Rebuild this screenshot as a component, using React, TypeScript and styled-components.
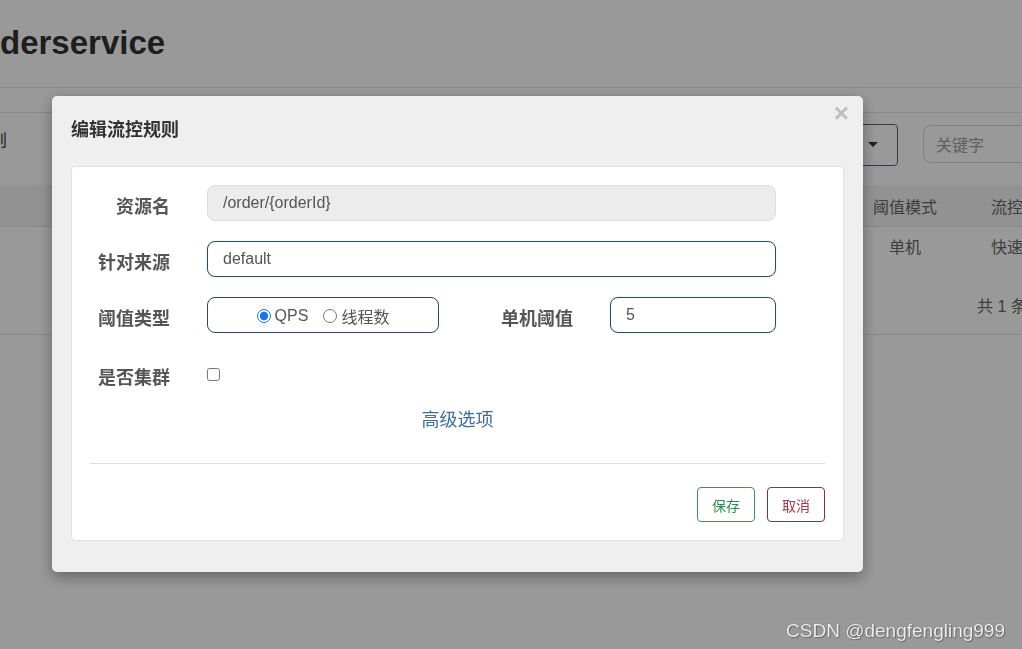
import React from 'react';
import styled, { createGlobalStyle } from 'styled-components';

const GlobalStyle = createGlobalStyle`
  html, body {
    margin: 0;
    padding: 0;
    background: #fff;
    overflow: hidden;
    font-family: "Liberation Sans", Arial, "Noto Sans CJK SC", sans-serif;
  }
  * {
    box-sizing: border-box;
  }
`;

/* ---------- page behind the dialog ---------- */

const Page = styled.div`
  width: 1022px;
  height: 649px;
  overflow: hidden;
`;

const Header = styled.div`
  height: 88px;
  display: flex;
  align-items: center;
  border-bottom: 1px solid #e4e4e4;
`;

const PageTitle = styled.h1`
  margin: 0 0 2px;
  font-size: 33px;
  font-weight: bold;
  color: #333;
`;

const Toolbar = styled.div`
  margin-top: 24px;
  height: 73px;
  padding-top: 11px;
  border-top: 1px solid #e4e4e4;
  display: flex;
  justify-content: space-between;
  align-items: flex-start;
`;

const CutLabel = styled.span`
  margin-left: -9px;
  margin-top: 3px;
  font-size: 16px;
  color: #333;
`;

const ToolGroup = styled.div`
  display: flex;
  align-items: flex-start;
  gap: 25px;
  margin-right: -41px;
`;

const SelectBox = styled.div`
  width: 120px;
  height: 42px;
  border: 1px solid #5e6478;
  border-radius: 4px;
  display: flex;
  align-items: center;
  justify-content: flex-end;
  padding-right: 19px;
`;

const Caret = styled.span`
  width: 0;
  height: 0;
  margin-top: -2px;
  border-left: 5px solid transparent;
  border-right: 5px solid transparent;
  border-top: 5px solid #333;
`;

const SearchBox = styled.div`
  width: 140px;
  height: 38px;
  margin-top: 1px;
  border: 1px solid #d4d4d4;
  border-radius: 8px;
  padding-left: 12px;
  display: flex;
  align-items: center;
  font-size: 16px;
  color: #a0a0a0;
`;

const TableRow = styled.div<{ $head?: boolean; $h: number }>`
  display: grid;
  grid-template-columns: 1fr 118px 118px;
  margin-right: -60px;
  height: ${p => p.$h}px;
  align-items: center;
  background: ${p => (p.$head ? '#f4f4f4' : 'transparent')};
  border-bottom: ${p => (p.$head ? '1px solid #e4e4e4' : 'none')};
  font-size: 16px;
  color: #666;
`;

const Cell = styled.div`
  text-align: center;
  white-space: nowrap;
`;

const Footer = styled.div`
  display: grid;
  grid-template-columns: 1fr 118px 118px;
  margin-right: -60px;
  height: 70px;
  padding-top: 31px;
  border-bottom: 1px solid #e4e4e4;
  font-size: 16px;
  line-height: 22px;
  color: #666;
`;

const FooterText = styled.div`
  grid-column: 3;
  padding-left: 13px;
  white-space: nowrap;
`;

/* ---------- dialog ---------- */

const Backdrop = styled.div`
  position: fixed;
  inset: 0;
  background: rgba(0, 0, 0, 0.4);
  display: flex;
  align-items: flex-start;
  padding: 96px 0 0 52px;
`;

const Modal = styled.div`
  width: 811px;
  background: #efefef;
  border-radius: 5px;
  box-shadow: 0 5px 15px rgba(0, 0, 0, 0.35);
  padding-bottom: 31px;
`;

const ModalHeader = styled.div`
  height: 70px;
  padding: 20px 14px 0 19px;
  display: flex;
  justify-content: space-between;
  align-items: flex-start;
`;

const ModalTitle = styled.h4`
  margin: 0;
  font-size: 18px;
  line-height: 24px;
  font-weight: bold;
  color: #333;
  font-family: "Noto Sans CJK SC", sans-serif;
`;

const Close = styled.span`
  margin-top: -16px;
  font-size: 26px;
  line-height: 1;
  font-weight: bold;
  color: #000;
  opacity: 0.2;
  font-family: "Liberation Sans", Arial, sans-serif;
`;

const Card = styled.div`
  margin: 0 19px;
  background: #fff;
  border: 1px solid #e0e0e0;
  border-radius: 4px;
  padding: 18px;
`;

const FormRow = styled.div<{ $h?: number }>`
  display: flex;
  align-items: center;
  height: ${p => p.$h || 36}px;
  margin-bottom: 20px;
`;

const Label = styled.label<{ $w?: number; $left?: number; $right?: number; $align?: string }>`
  width: ${p => p.$w || 80}px;
  margin-left: ${p => p.$left || 0}px;
  margin-right: ${p => (p.$right === undefined ? 37 : p.$right)}px;
  text-align: ${p => p.$align || 'right'};
  font-size: 18px;
  font-weight: bold;
  color: #555;
  font-family: "Noto Sans CJK SC", sans-serif;
  padding-top: 3px;
  white-space: nowrap;
`;

const TextInput = styled.input<{ $w: number }>`
  width: ${p => p.$w}px;
  height: 36px;
  border: 1px solid #2f4a60;
  border-radius: 8px;
  padding: 0 15px;
  font-size: 16px;
  color: #555;
  font-family: "Liberation Sans", Arial, sans-serif;
  background: #fff;
  outline: none;
  box-shadow: 0 0 2px rgba(102, 175, 233, 0.35);

  &:disabled {
    background: #ececec;
    border-color: #dcdcdc;
    box-shadow: none;
  }
`;

const RadioBox = styled.div`
  width: 232px;
  height: 36px;
  border: 1px solid #2f4a60;
  border-radius: 8px;
  display: flex;
  align-items: center;
  justify-content: center;
  gap: 15px;
  font-size: 16px;
  color: #555;
  font-family: "Liberation Sans", Arial, "Noto Sans CJK SC", sans-serif;
`;

const RadioLabel = styled.label`
  display: inline-flex;
  align-items: center;
  gap: 4px;
  padding-top: 2px;
`;

const Radio = styled.input`
  margin: 0;
  width: 14px;
  height: 14px;
  accent-color: #1a73e8;
`;

const Checkbox = styled.input`
  margin: 0;
  width: 13px;
  height: 13px;
`;

const LinkRow = styled.div`
  margin-top: -9px;
  text-align: center;
  line-height: 24px;
`;

const Link = styled.a`
  font-size: 18px;
  color: #3d6f9e;
  text-decoration: none;
  font-family: "Noto Sans CJK SC", sans-serif;
`;

const Divider = styled.hr`
  margin: 30px 0 23px;
  border: 0;
  border-top: 1px solid #ddd;
`;

const Actions = styled.div`
  display: flex;
  justify-content: flex-end;
  gap: 12px;
`;

const Button = styled.button<{ $tone: 'save' | 'cancel' }>`
  height: 35px;
  padding: 0 14px;
  background: #fff;
  border-radius: 4px;
  font-size: 14px;
  font-family: "Noto Sans CJK SC", sans-serif;
  border: 1px solid ${p => (p.$tone === 'save' ? '#3f8f5f' : '#8e2d40')};
  color: ${p => (p.$tone === 'save' ? '#2f8a52' : '#b23445')};
`;

const Watermark = styled.div`
  position: fixed;
  right: 17px;
  bottom: 7px;
  font-size: 19px;
  color: #eee;
  text-shadow: 0 0 1px rgba(0, 0, 0, 0.5), 1px 1px 1px rgba(0, 0, 0, 0.3);
  font-family: "Liberation Sans", Arial, sans-serif;
`;

export default function App() {
  return (
    <>
      <GlobalStyle />
      <Page>
        <Header>
          <PageTitle>derservice</PageTitle>
        </Header>
        <Toolbar>
          <CutLabel>则</CutLabel>
          <ToolGroup>
            <SelectBox>
              <Caret />
            </SelectBox>
            <SearchBox>关键字</SearchBox>
          </ToolGroup>
        </Toolbar>
        <TableRow $head $h={42}>
          <Cell />
          <Cell>阈值模式</Cell>
          <Cell>流控效果</Cell>
        </TableRow>
        <TableRow $h={38}>
          <Cell />
          <Cell>单机</Cell>
          <Cell>快速失败</Cell>
        </TableRow>
        <Footer>
          <FooterText>共 1 条记录</FooterText>
        </Footer>
      </Page>

      <Backdrop>
        <Modal>
          <ModalHeader>
            <ModalTitle>编辑流控规则</ModalTitle>
            <Close>×</Close>
          </ModalHeader>
          <Card>
            <FormRow>
              <Label>资源名</Label>
              <TextInput $w={569} disabled defaultValue="/order/{orderId}" />
            </FormRow>
            <FormRow>
              <Label>针对来源</Label>
              <TextInput $w={569} defaultValue="default" />
            </FormRow>
            <FormRow>
              <Label>阈值类型</Label>
              <RadioBox>
                <RadioLabel>
                  <Radio type="radio" name="grade" defaultChecked />
                  QPS
                </RadioLabel>
                <RadioLabel>
                  <Radio type="radio" name="grade" />
                  线程数
                </RadioLabel>
              </RadioBox>
              <Label $w={74} $left={62} $right={35} $align="left">
                单机阈值
              </Label>
              <TextInput $w={166} defaultValue="5" />
            </FormRow>
            <FormRow $h={42}>
              <Label>是否集群</Label>
              <Checkbox type="checkbox" />
            </FormRow>
            <LinkRow>
              <Link href="#">高级选项</Link>
            </LinkRow>
            <Divider />
            <Actions>
              <Button $tone="save">保存</Button>
              <Button $tone="cancel">取消</Button>
            </Actions>
          </Card>
        </Modal>
      </Backdrop>
      <Watermark>CSDN @dengfengling999</Watermark>
    </>
  );
}
